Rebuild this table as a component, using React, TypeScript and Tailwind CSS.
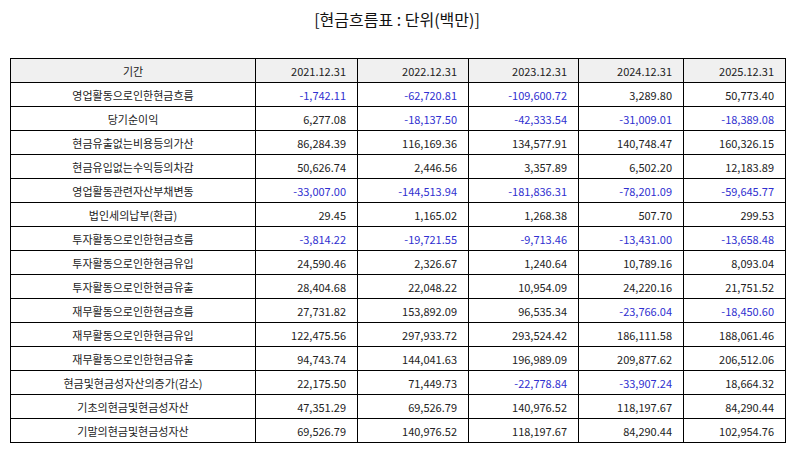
import React from "react";

const cols = ["2021.12.31", "2022.12.31", "2023.12.31", "2024.12.31", "2025.12.31"];

const rows: [string, string[]][] = [
  ["영업활동으로인한현금흐름", ["-1,742.11", "-62,720.81", "-109,600.72", "3,289.80", "50,773.40"]],
  ["당기순이익", ["6,277.08", "-18,137.50", "-42,333.54", "-31,009.01", "-18,389.08"]],
  ["현금유출없는비용등의가산", ["86,284.39", "116,169.36", "134,577.91", "140,748.47", "160,326.15"]],
  ["현금유입없는수익등의차감", ["50,626.74", "2,446.56", "3,357.89", "6,502.20", "12,183.89"]],
  ["영업활동관련자산부채변동", ["-33,007.00", "-144,513.94", "-181,836.31", "-78,201.09", "-59,645.77"]],
  ["법인세의납부(환급)", ["29.45", "1,165.02", "1,268.38", "507.70", "299.53"]],
  ["투자활동으로인한현금흐름", ["-3,814.22", "-19,721.55", "-9,713.46", "-13,431.00", "-13,658.48"]],
  ["투자활동으로인한현금유입", ["24,590.46", "2,326.67", "1,240.64", "10,789.16", "8,093.04"]],
  ["투자활동으로인한현금유출", ["28,404.68", "22,048.22", "10,954.09", "24,220.16", "21,751.52"]],
  ["재무활동으로인한현금흐름", ["27,731.82", "153,892.09", "96,535.34", "-23,766.04", "-18,450.60"]],
  ["재무활동으로인한현금유입", ["122,475.56", "297,933.72", "293,524.42", "186,111.58", "188,061.46"]],
  ["재무활동으로인한현금유출", ["94,743.74", "144,041.63", "196,989.09", "209,877.62", "206,512.06"]],
  ["현금및현금성자산의증가(감소)", ["22,175.50", "71,449.73", "-22,778.84", "-33,907.24", "18,664.32"]],
  ["기초의현금및현금성자산", ["47,351.29", "69,526.79", "140,976.52", "118,197.67", "84,290.44"]],
  ["기말의현금및현금성자산", ["69,526.79", "140,976.52", "118,197.67", "84,290.44", "102,954.76"]],
];

export default function App() {
  return (
    <div
      className="w-[794px] h-[452px] bg-white text-[#222]"
      style={{ fontFamily: '"Noto Sans CJK KR", "Noto Sans", sans-serif' }}
    >
      <div className="pt-[8px] h-[58px] text-center text-[16px] leading-[22px] text-[#111]">
        [현금흐름표 : 단위(백만)]
      </div>
      <table className="ml-[10px] w-[775px] table-fixed border-collapse text-[11px] leading-[14px]">
        <colgroup>
          <col className="w-[245px]" />
          <col className="w-[102px]" />
          <col className="w-[111px]" />
          <col className="w-[110px]" />
          <col className="w-[105px]" />
          <col className="w-[102px]" />
        </colgroup>
        <thead>
          <tr className="h-[24px] bg-[#f0f0f0]">
            <th className="border border-black font-normal text-center p-0">기간</th>
            {cols.map((c) => (
              <th key={c} className="border border-black font-normal text-right pr-[11px] p-0">
                {c}
              </th>
            ))}
          </tr>
        </thead>
        <tbody>
          {rows.map(([label, vals]) => (
            <tr key={label} className="h-[24px]">
              <td className="border border-black text-center p-0">{label}</td>
              {vals.map((v, i) => (
                <td
                  key={i}
                  className={
                    v.startsWith("-")
                      ? "border border-black text-right pr-[11px] p-0 text-[#3030d0]"
                      : "border border-black text-right pr-[11px] p-0"
                  }
                >
                  {v}
                </td>
              ))}
            </tr>
          ))}
        </tbody>
      </table>
    </div>
  );
}
